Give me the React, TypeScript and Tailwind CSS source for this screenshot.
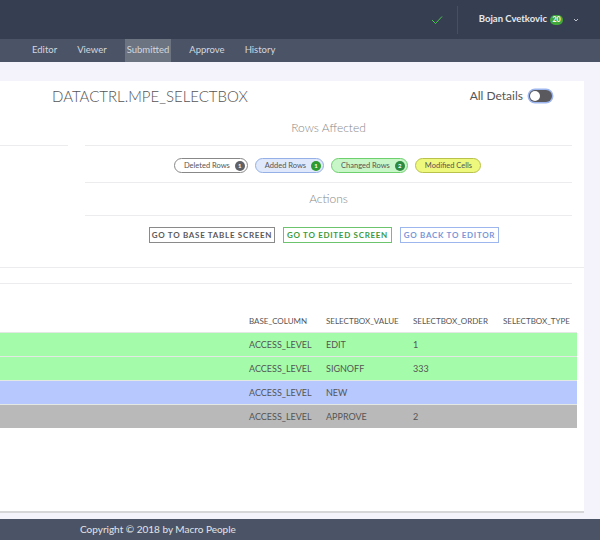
import React from "react";

const navItems = ["Editor", "Viewer", "Submitted", "Approve", "History"];

const rows = [
  { bg: "bg-[#a4fcaa]", col: "ACCESS_LEVEL", value: "EDIT", order: "1" },
  { bg: "bg-[#a4fcaa]", col: "ACCESS_LEVEL", value: "SIGNOFF", order: "333" },
  { bg: "bg-[#b6c8fd]", col: "ACCESS_LEVEL", value: "NEW", order: "" },
  { bg: "bg-[#b9b9b9]", col: "ACCESS_LEVEL", value: "APPROVE", order: "2" },
];

const Pill = ({
  label,
  count,
  className,
  badge,
}: {
  label: string;
  count?: string;
  className: string;
  badge?: string;
}) => (
  <span
    className={`flex h-[15px] items-center gap-[5px] rounded-full border pl-[9px] text-[7.5px] text-[#555] ${
      count ? "pr-[2px]" : "pr-[8px]"
    } ${className}`}
  >
    {label}
    {count && (
      <span
        className={`flex h-[10px] w-[10px] items-center justify-center rounded-full text-[6px] font-bold text-white ${badge}`}
      >
        {count}
      </span>
    )}
  </span>
);

const App = () => {
  return (
    <div className="flex h-[540px] w-[600px] flex-col overflow-hidden bg-[#f4f2fb] font-['Lato',sans-serif]">
      {/* top bar */}
      <header className="flex h-[39px] shrink-0 items-center justify-end bg-[#353f51] pr-[21px]">
        <svg width="12" height="10" viewBox="0 0 12 10" className="mr-[14px]">
          <polyline points="1,5 4.5,8.5 11,1.5" fill="none" stroke="#4cc34c" strokeWidth="1" />
        </svg>
        <div className="mr-[21px] h-[28px] w-px bg-[#475063]" />
        <span className="text-[9.5px] font-bold text-[#e6e8ec]">Bojan Cvetkovic</span>
        <span className="ml-[3px] flex h-[10px] w-[13px] items-center justify-center rounded-full bg-[#40a83a] text-[7px] font-bold text-white">
          20
        </span>
        <svg width="6" height="4" viewBox="0 0 6 4" className="ml-[10px]">
          <polyline points="1,1 3,3 5,1" fill="none" stroke="#c0c4cc" strokeWidth="1" />
        </svg>
      </header>

      {/* nav */}
      <nav className="flex h-[23px] shrink-0 items-stretch bg-[#4b5467] pl-[30px] text-[9.5px] text-[#d2d6de]">
        {navItems.map((item) => (
          <span
            key={item}
            className={`mr-[16px] flex items-center px-[2px] ${
              item === "Submitted" ? "bg-[#6c7481]" : ""
            }`}
          >
            {item}
          </span>
        ))}
      </nav>

      <main className="mt-[19px] mr-[16px] flex h-[432px] shrink-0 flex-col border-b-2 border-[#d6d6d9] bg-white">
        {/* title */}
        <div className="flex h-[30px] items-center justify-between pl-[52px] pr-[32px]">
          <span className="text-[15px] font-light text-[#555]">DATACTRL.MPE_SELECTBOX</span>
          <span className="flex items-center text-[12px] text-[#555]">
            All Details
            <span className="ml-[6px] flex h-[12px] w-[23px] items-center rounded-full bg-[#5a5a5e] p-[1px] shadow-[0_0_0_1.5px_#9db6ee]">
              <span className="h-[10px] w-[10px] rounded-full bg-white" />
            </span>
          </span>
        </div>

        <div className="flex">
          <div className="h-[35px] w-[68px] border-b border-[#ececef]" />
          <div className="ml-[17px] w-[487px]">
            <div className="flex h-[35px] items-center justify-center border-b border-[#ececef] text-[12px] font-light text-[#888]">
              Rows Affected
            </div>
            <div className="flex h-[37px] items-center justify-center gap-[7px] border-b border-[#ececef] pt-[3px] pr-[2px]">
              <Pill label="Deleted Rows" count="1" className="border-[#888] bg-white" badge="bg-[#5f6166]" />
              <Pill label="Added Rows" count="1" className="border-[#94b0e6] bg-[#dfe9fb]" badge="bg-[#2f9a2f]" />
              <Pill label="Changed Rows" count="2" className="border-[#6dd06d] bg-[#c9f6c9]" badge="bg-[#2d8a3e]" />
              <Pill label="Modified Cells" className="border-[#b9c24a] bg-[#eef87c]" />
            </div>
            <div className="flex h-[33px] items-center justify-center border-b border-[#ececef] text-[12px] font-light text-[#888]">
              Actions
            </div>
            <div className="flex h-[38px] items-start justify-center gap-[8px] pt-[11px] pr-[9px] text-[8px] font-bold tracking-[0.7px]">
              <span className="flex h-[16px] w-[126px] items-center justify-center border border-[#8a8a8a] text-[#5a5a5a]">
                GO TO BASE TABLE SCREEN
              </span>
              <span className="flex h-[16px] w-[109px] items-center justify-center border border-[#6cc46c] text-[#3c9a3c]">
                GO TO EDITED SCREEN
              </span>
              <span className="flex h-[16px] w-[99px] items-center justify-center border border-[#9db6ee] text-[#7a96d8]">
                GO BACK TO EDITOR
              </span>
            </div>
          </div>
        </div>

        <div className="mt-[13px] border-b border-[#ececef]" />
        <div className="mt-[15px] w-[572px] border-b border-[#ececef]" />

        {/* table */}
        <div className="mt-[26px] w-[577px] text-[#555]">
          <div className="flex h-[22px] items-center text-[8px] uppercase">
            <span className="w-[249px]" />
            <span className="w-[77px]">BASE_COLUMN</span>
            <span className="w-[87px]">SELECTBOX_VALUE</span>
            <span className="w-[90px]">SELECTBOX_ORDER</span>
            <span>SELECTBOX_TYPE</span>
          </div>
          {rows.map((r, i) => (
            <div
              key={i}
              className={`flex h-[24px] items-center border-t border-[#e4e8e4] text-[9px] ${r.bg}`}
            >
              <span className="w-[249px]" />
              <span className="w-[77px]">{r.col}</span>
              <span className="w-[87px]">{r.value}</span>
              <span className="w-[90px]">{r.order}</span>
            </div>
          ))}
        </div>
      </main>

      <footer className="mt-[6px] flex h-[21px] shrink-0 items-center bg-[#4b5467] pl-[80px] text-[10px] text-[#e2e4e8]">
        Copyright © 2018 by Macro People
      </footer>
    </div>
  );
};

export default App;
